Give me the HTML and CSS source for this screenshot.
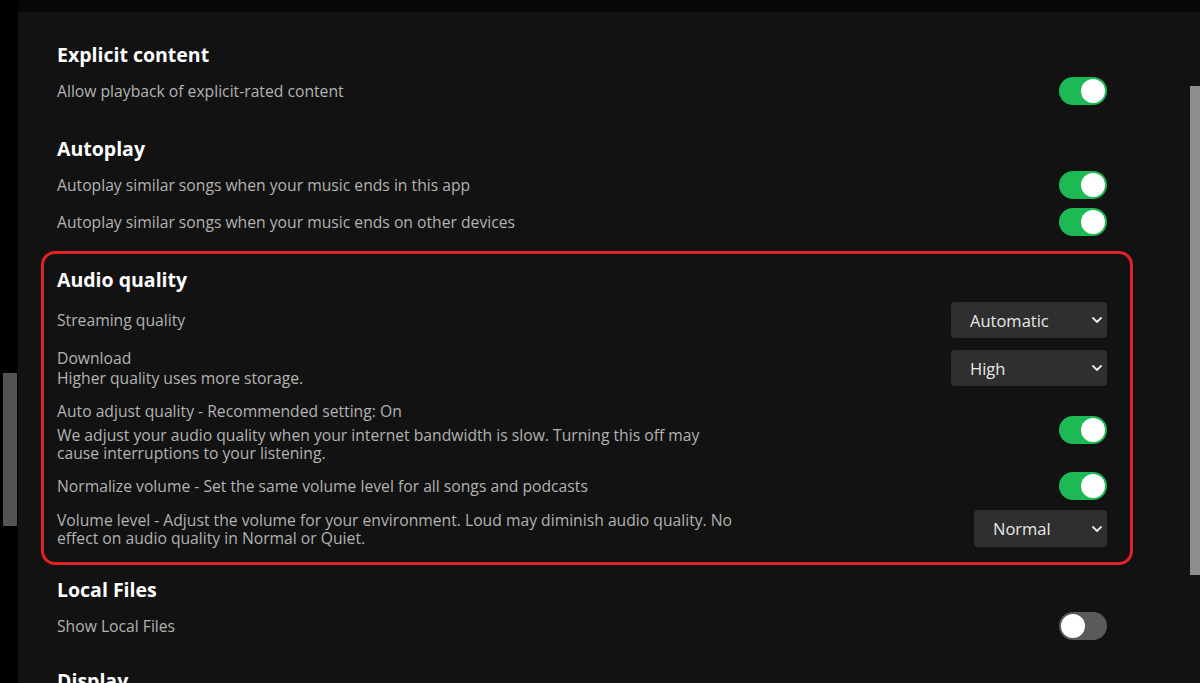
FILE: index.html
```html
<!DOCTYPE html>
<html>
<head>
<meta charset="utf-8">
<link rel="stylesheet" href="styles.css">
</head>
<body>
<div class="rail-left"><div class="thumb-left"></div></div>
<div class="main">
  <div class="topbar"></div>
  <div class="body-row">
    <div class="content">
      <section class="section">
        <div class="heading">Explicit content</div>
        <div class="row">
          <div class="text">Allow playback of explicit-rated content</div>
          <div class="toggle on"><span class="knob"></span></div>
        </div>
      </section>
      <section class="section gap">
        <div class="heading">Autoplay</div>
        <div class="row">
          <div class="text">Autoplay similar songs when your music ends in this app</div>
          <div class="toggle on"><span class="knob"></span></div>
        </div>
        <div class="row">
          <div class="text">Autoplay similar songs when your music ends on other devices</div>
          <div class="toggle on"><span class="knob"></span></div>
        </div>
      </section>
      <section class="audio-box">
        <div class="heading">Audio quality</div>
        <div class="audio-rows">
          <div class="arow">
            <div class="text">Streaming quality</div>
            <div class="select wide"><span>Automatic</span><svg class="chev" viewBox="0 0 10 6"><path d="M1 1l4 4 4-4"/></svg></div>
          </div>
          <div class="arow">
            <div class="text">Download<br>Higher quality uses more storage.</div>
            <div class="select wide"><span>High</span><svg class="chev" viewBox="0 0 10 6"><path d="M1 1l4 4 4-4"/></svg></div>
          </div>
          <div class="arow">
            <div class="text">
              <div class="title">Auto adjust quality - Recommended setting: On</div>
              <div class="desc">We adjust your audio quality when your internet bandwidth is slow. Turning this off may<br>cause interruptions to your listening.</div>
            </div>
            <div class="toggle on"><span class="knob"></span></div>
          </div>
          <div class="arow">
            <div class="text">Normalize volume - Set the same volume level for all songs and podcasts</div>
            <div class="toggle on"><span class="knob"></span></div>
          </div>
          <div class="arow">
            <div class="text desc">Volume level - Adjust the volume for your environment. Loud may diminish audio quality. No<br>effect on audio quality in Normal or Quiet.</div>
            <div class="select narrow"><span>Normal</span><svg class="chev" viewBox="0 0 10 6"><path d="M1 1l4 4 4-4"/></svg></div>
          </div>
        </div>
      </section>
      <section class="section">
        <div class="heading">Local Files</div>
        <div class="row">
          <div class="text">Show Local Files</div>
          <div class="toggle"><span class="knob"></span></div>
        </div>
      </section>
      <section class="section gap-display">
        <div class="heading">Display</div>
      </section>
    </div>
    <div class="rail-right"><div class="thumb-right"></div></div>
  </div>
</div>
</body>
</html>
```

FILE: styles.css
```css
* { box-sizing: border-box; }
html, body { margin: 0; padding: 0; }
body {
  background: #121212;
  font-family: "Open Sans", Lato, Arial, sans-serif;
  display: flex;
  width: 1200px;
  height: 683px;
  overflow: hidden;
}
.rail-left {
  width: 18px;
  flex: none;
  background: #000;
  padding-top: 373px;
}
.thumb-left {
  margin-left: 3px;
  width: 14px;
  height: 153px;
  background: #545454;
}
.main {
  flex: 1;
  display: flex;
  flex-direction: column;
}
.topbar {
  height: 12px;
  background: #070707;
  flex: none;
}
.body-row {
  flex: 1;
  display: flex;
}
.content {
  flex: 1;
  padding: 24px 83px 0 39px;
}
.rail-right {
  width: 10px;
  flex: none;
  padding-top: 74px;
}
.thumb-right {
  width: 10px;
  height: 489px;
  background: #8e8e8e;
}
.heading {
  height: 36px;
  display: flex;
  align-items: center;
  font-size: 19.5px;
  font-weight: 700;
  color: #fff;
  white-space: nowrap;
}
.section.gap { margin-top: 21px; }
.section.gap-display { margin-top: 18px; }
.row {
  display: flex;
  align-items: center;
  justify-content: space-between;
  min-height: 37px;
}
.text {
  font-size: 15.7px;
  line-height: 20px;
  color: #b3b3b3;
  white-space: nowrap;
}
.title { line-height: 26px; }
.desc { line-height: 18px; }
.title + .desc { margin-top: 2px; }
.toggle {
  width: 48px;
  height: 28px;
  border-radius: 14px;
  background: #5a5a5a;
  display: flex;
  align-items: center;
  padding: 0 2px;
  flex: none;
}
.toggle.on {
  background: #1db954;
  justify-content: flex-end;
}
.knob {
  width: 24px;
  height: 24px;
  border-radius: 50%;
  background: #fff;
}
.audio-box {
  margin: 11px -26px 6px -16px;
  border: 3px solid #e1222b;
  border-radius: 14px;
  padding: 7px 23px 15px 13px;
}
.audio-rows {
  display: flex;
  flex-direction: column;
  gap: 10px;
  padding-top: 5px;
}
.arow {
  display: flex;
  align-items: center;
  justify-content: space-between;
}
.select {
  height: 36px;
  background: #2f2f2f;
  border-radius: 4px;
  display: flex;
  align-items: center;
  justify-content: space-between;
  padding: 0 5px 0 19px;
  color: #e8e8e8;
  font-size: 16.5px;
  flex: none;
}
.select.wide { width: 156px; }
.select.narrow { width: 133px; height: 37px; }
.chev {
  width: 10px;
  height: 6px;
  fill: none;
  stroke: #e8e8e8;
  stroke-width: 1.8;
  stroke-linecap: round;
  stroke-linejoin: round;
}
```
